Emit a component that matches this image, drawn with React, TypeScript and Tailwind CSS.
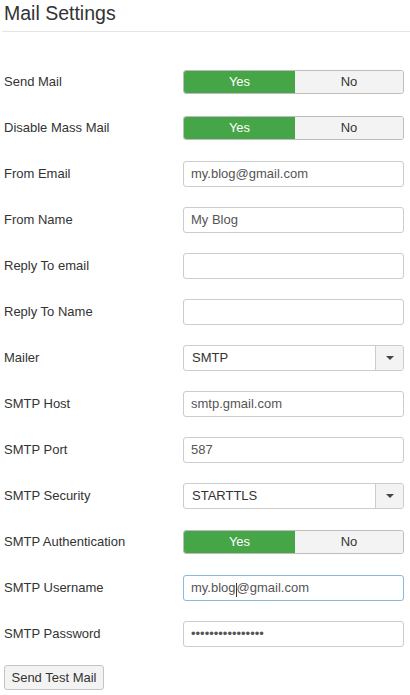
import React from 'react';

type Row =
  | { label: string; kind: 'toggle' }
  | { label: string; kind: 'text'; value?: string; focused?: boolean }
  | { label: string; kind: 'select'; value: string }
  | { label: string; kind: 'password'; value: string };

const rows: Row[] = [
  { label: 'Send Mail', kind: 'toggle' },
  { label: 'Disable Mass Mail', kind: 'toggle' },
  { label: 'From Email', kind: 'text', value: 'my.blog@gmail.com' },
  { label: 'From Name', kind: 'text', value: 'My Blog' },
  { label: 'Reply To email', kind: 'text' },
  { label: 'Reply To Name', kind: 'text' },
  { label: 'Mailer', kind: 'select', value: 'SMTP' },
  { label: 'SMTP Host', kind: 'text', value: 'smtp.gmail.com' },
  { label: 'SMTP Port', kind: 'text', value: '587' },
  { label: 'SMTP Security', kind: 'select', value: 'STARTTLS' },
  { label: 'SMTP Authentication', kind: 'toggle' },
  { label: 'SMTP Username', kind: 'text', value: 'my.blog@gmail.com', focused: true },
  { label: 'SMTP Password', kind: 'password', value: '••••••••••••••••' },
];

function Toggle() {
  return (
    <div className="flex h-6 w-[221px] overflow-hidden rounded-[3px] border border-[#bdbdbd] text-[13px]">
      <div className="flex w-[111px] items-center justify-center bg-[#46a546] text-white">Yes</div>
      <div className="flex flex-1 items-center justify-center bg-[#f3f3f3] text-[#333]">No</div>
    </div>
  );
}

function TextBox({ value, focused }: { value?: string; focused?: boolean }) {
  // caret sits after "my.blog" in the focused username field
  const content = focused && value ? (
    <>
      {value.slice(0, 7)}
      <span className="inline-block h-[14px] w-px translate-y-[2px] bg-[#333]" />
      {value.slice(7)}
    </>
  ) : (
    value
  );
  return (
    <div
      className={`flex h-[26px] w-[221px] items-center rounded-[3px] border bg-white px-[7px] text-[13px] text-[#555] ${
        focused ? 'border-[#8cb8db]' : 'border-[#cccccc]'
      }`}
    >
      {content}
    </div>
  );
}

function SelectBox({ value }: { value: string }) {
  return (
    <div className="flex h-[26px] w-[221px] overflow-hidden rounded-[3px] border border-[#cccccc] bg-white text-[13px] text-[#333]">
      <div className="flex flex-1 items-center px-[8px]">{value}</div>
      <div className="flex w-[28px] items-center justify-center border-l border-[#cccccc] bg-[#f3f3f3]">
        <svg width="8" height="4" viewBox="0 0 8 4">
          <path d="M0 0 L8 0 L4 4 Z" fill="#444" />
        </svg>
      </div>
    </div>
  );
}

export default function App() {
  return (
    <div className="min-h-[695px] w-[410px] bg-white pl-[4px] font-['Liberation_Sans',Arial,sans-serif] text-[#333]">
      <div className="ml-[-2px] border-b border-[#e5e5e5] pb-[6px] pl-[2px] pt-[1px]">
        <h1 className="text-[19.5px] leading-[24px] text-[#333]">Mail Settings</h1>
      </div>

      <div className="mt-[27px] flex flex-col">
        {rows.map((row) => (
          <div key={row.label} className="flex h-[46px] items-center">
            <div className="w-[179px] text-[13px] text-[#333]">{row.label}</div>
            {row.kind === 'toggle' && <Toggle />}
            {row.kind === 'text' && <TextBox value={row.value} focused={row.focused} />}
            {row.kind === 'select' && <SelectBox value={row.value} />}
            {row.kind === 'password' && (
              <div className="flex h-[26px] w-[221px] items-center rounded-[3px] border border-[#cccccc] bg-white px-[7px] text-[13px] text-[#555]">
                {row.value}
              </div>
            )}
          </div>
        ))}
      </div>

      <button className="mt-[8px] h-[25px] w-[100px] rounded-[3px] border border-[#c4c4c4] bg-[#f3f3f3] text-[13px] text-[#333]">
        Send Test Mail
      </button>
    </div>
  );
}
